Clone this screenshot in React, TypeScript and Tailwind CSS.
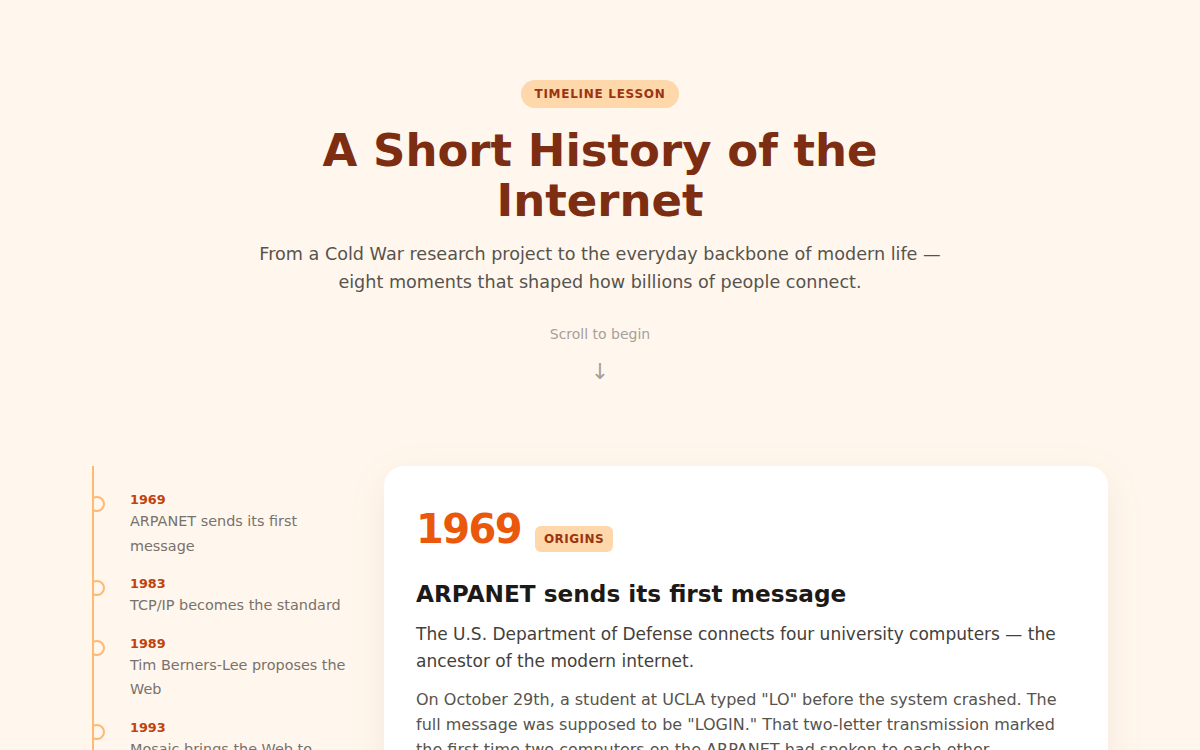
import React from "react";

const moments = [
  { year: "1969", title: "ARPANET sends its first message" },
  { year: "1983", title: "TCP/IP becomes the standard" },
  { year: "1989", title: "Tim Berners-Lee proposes the Web" },
  { year: "1993", title: "Mosaic brings the Web to everyone" },
  { year: "1998", title: "Google starts organizing the Web" },
  { year: "2004", title: "Social networks go mainstream" },
  { year: "2007", title: "The iPhone puts the Web in pockets" },
  { year: "2020", title: "The internet keeps the world running" },
];

const App = () => {
  return (
    <div
      className="min-h-screen bg-[#fff7ed] text-stone-700"
      style={{ fontFamily: '"DejaVu Sans", Verdana, sans-serif' }}
    >
      {/* intro */}
      <header className="flex flex-col items-center px-6 pt-20 pb-[83px] text-center">
        <span className="rounded-full bg-[#fed7aa] px-3.5 py-[6px] text-[12px] font-bold leading-4 tracking-[0.06em] text-[#9a3412]">
          TIMELINE LESSON
        </span>
        <h1 className="mt-[18px] max-w-[760px] text-[45px] font-bold leading-[1.1] text-[#7c2d12]">
          A Short History of the Internet
        </h1>
        <p className="mt-[15px] max-w-[720px] text-[17.6px] leading-[28px] text-stone-600">
          From a Cold War research project to the everyday backbone of modern life — eight
          moments that shaped how billions of people connect.
        </p>
        <p className="mt-[28px] text-[14px] text-stone-400">Scroll to begin</p>
        <span className="mt-[16px] text-[22px] leading-none text-stone-400">↓</span>
      </header>

      {/* timeline */}
      <main className="mx-auto flex w-[1016px] items-start gap-8">
        <nav className="relative w-[260px] shrink-0 overflow-hidden border-l-2 border-[#fdba74] pt-6">
          <ul className="flex flex-col gap-4">
            {moments.map((m) => (
              <li key={m.year} className="relative pl-9">
                <span className="absolute left-[-5px] top-[6px] h-4 w-4 rounded-full border-2 border-[#fdba74] bg-[#fff7ed]" />
                <div className="text-[12.8px] font-bold leading-5 text-[#c2410c]">{m.year}</div>
                <div className="-mt-px text-[14.4px] leading-[24.5px] text-stone-500">{m.title}</div>
              </li>
            ))}
          </ul>
        </nav>

        <article className="flex-1 rounded-[20px] bg-white p-8 shadow-[0_10px_40px_rgba(154,52,18,0.08)]">
          <div className="flex items-baseline gap-[14px] pt-[3px]">
            <span className="text-[40px] font-bold leading-[56px] tracking-[-0.04em] text-[#ea580c]">
              1969
            </span>
            <span className="rounded-md bg-[#fed7aa] px-[9px] py-1 text-[12px] font-bold tracking-[0.04em] text-[#9a3412]">
              ORIGINS
            </span>
          </div>
          <h2 className="mt-[21px] text-[23.2px] font-bold leading-8 text-stone-900">
            ARPANET sends its first message
          </h2>
          <p className="mt-[11px] text-[17px] leading-[27px] text-stone-700">
            The U.S. Department of Defense connects four university computers — the ancestor of
            the modern internet.
          </p>
          <p className="mt-[12px] text-[16px] leading-[25px] text-stone-600">
            On October 29th, a student at UCLA typed "LO" before the system crashed. The full
            message was supposed to be "LOGIN." That two-letter transmission marked the first
            time two computers on the ARPANET had spoken to each other.
          </p>
          <p className="mt-[12px] text-[16px] leading-[25px] text-stone-600">
            Within a few years, dozens of research institutions were linked, sharing files and
            sending the first electronic mail across the network.
          </p>
        </article>
      </main>
    </div>
  );
};

export default App;
